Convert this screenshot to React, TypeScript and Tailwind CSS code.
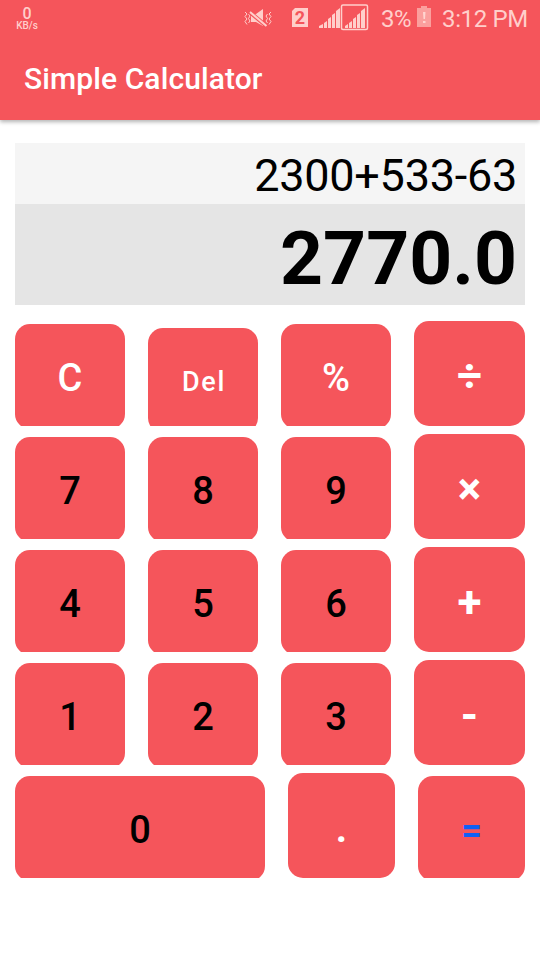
import clsx from 'clsx'

type Key = {
  label: string
  className: string
}

const digit = 'mt-[3px] pt-[3px] text-[38px] font-medium text-black'
const operator = 'pt-1 text-[44px] font-bold text-white'

const rows: Key[][] = [
  [
    { label: 'C', className: 'mt-[3px] pt-[3px] text-[38px] font-medium text-white' },
    { label: 'Del', className: 'mt-[7px] pt-[3px] pl-[2px] text-[27px] font-medium tracking-[1.6px] text-white' },
    { label: '%', className: 'mt-[3px] pt-[3px] text-[38px] font-medium text-white' },
    { label: '÷', className: operator },
  ],
  [
    { label: '7', className: digit },
    { label: '8', className: digit },
    { label: '9', className: digit },
    { label: '×', className: operator },
  ],
  [
    { label: '4', className: digit },
    { label: '5', className: digit },
    { label: '6', className: digit },
    { label: '+', className: operator },
  ],
  [
    { label: '1', className: digit },
    { label: '2', className: digit },
    { label: '3', className: digit },
    { label: '-', className: operator },
  ],
]

const bottomRow: Key[] = [
  { label: '0', className: digit },
  { label: '.', className: 'pt-[7px] text-[39px] font-bold text-white' },
  { label: '=', className: 'mt-[3px] pt-[5px] text-[36px] font-bold text-[#0f60f5]' },
]

export default function App() {
  return (
    <div className="flex h-[960px] w-[540px] flex-col overflow-hidden bg-white font-[Roboto,sans-serif]">
      <header className="h-[120px] shrink-0 bg-[#f5555b] shadow-[0_2px_4px_rgba(0,0,0,0.3)]">
        <StatusBar />
        <h1 className="pt-6 pl-6 text-[30px] leading-[36px] font-medium tracking-[0.1px] text-white">Simple Calculator</h1>
      </header>

      <main className="px-[15px] pt-[23px]">
        <div className="h-[61px] bg-[#f5f5f5] pr-2 text-right text-[45px] leading-[65px] tracking-[-0.25px] text-black">
          2300+533-63
        </div>
        <div className="h-[101px] bg-[#e5e5e5] pr-2 text-right text-[75px] leading-[109px] font-bold text-black">
          2770.0
        </div>

        <div className="mt-4 flex flex-col gap-2">
          {rows.map(row => (
            <div key={row[0].label} className="grid h-[105px] grid-cols-[110px_110px_110px_111px] gap-x-[23px] overflow-hidden">
              {row.map(k => <KeyButton key={k.label} {...k} />)}
            </div>
          ))}
          <div className="grid h-[105px] grid-cols-[250px_107px_107px] gap-x-[23px] overflow-hidden">
            {bottomRow.map(k => <KeyButton key={k.label} {...k} />)}
          </div>
        </div>
      </main>
    </div>
  )
}

function KeyButton({ label, className }: Key) {
  return (
    <button className={clsx('flex h-[105px] items-center justify-center rounded-[15px] bg-[#f5555b] leading-none', className)}>
      {label}
    </button>
  )
}

function StatusBar() {
  return (
    <div className="flex h-[37px] items-start text-[#ffcfcb]">
      <div className="ml-[15px] w-6 pt-[5px] text-center">
        <p className="text-[16px] leading-[17px] font-medium">0</p>
        <p className="text-[10px] leading-[8px] font-medium">KB/s</p>
      </div>

      <svg className="mt-2 ml-[204px] h-5 w-[30px]" viewBox="0 0 30 20" fill="none" stroke="currentColor">
        <path d="M2 4l2 2-2 2.500 2 2.500-2 2.500 2 3M5.500 6l1.500 2-1.500 2.500 1.500 2.500-1.500 2M28 4l-2 2 2 2.500-2 2.500 2 2.500-2 3M24.500 6l-1.500 2 1.500 2.500-1.500 2.500 1.500 2" strokeWidth="1" />
        <path d="M8 6h5l7-5v17l-7-4H8z" fill="currentColor" stroke="none" />
        <path d="M6 3.500l18 15" stroke="#f5555b" strokeWidth="4" />
        <path d="M7 4l16.500 14" strokeWidth="2" />
      </svg>

      <div className="relative mt-2 ml-[19px] h-[19px] w-4">
        <svg className="h-full w-full" viewBox="0 0 16 19" fill="currentColor">
          <path d="M3 0h13v19H0V3z" />
        </svg>
        <span className="absolute inset-0 text-center text-[18px] leading-[20px] font-bold text-[#f5555b]">2</span>
      </div>

      <svg className="mt-[3px] ml-[11px] h-7 w-[52px]" viewBox="0 0 52 28" fill="currentColor">
        <path d="M0 25v-2l4-2v4zM5 20l3-2v7H5zM9 16l3-2v11H9zM13 12l3-2v15h-3zM17 8l4-3v20h-4z" />
        <rect x="22.500" y="2" width="26" height="24.500" rx="1.500" fill="none" stroke="currentColor" strokeWidth="1.500" />
        <path d="M26 25v-2l3-2v4zM30 20l3-2v7h-3zM34 16l3-2v11h-3zM38 12l3-2v15h-3zM42 8l4-3v20h-4z" />
      </svg>

      <span className="mt-[5px] ml-[10px] w-9 text-[24px] leading-[28px] tracking-[-0.4px]">3%</span>
      <svg className="mt-[6px] h-[21px] w-[14px]" viewBox="0 0 14 21">
        <path d="M0 2h4V0h6v2h4v19H0z" fill="#fb9f9d" />
        <path d="M6 6h2.500l-.5 7H6.500zM6 15h2.500v2H6z" fill="#ffd5d0" />
      </svg>
      <span className="mt-[5px] ml-[11px] text-[24px] leading-[28px] tracking-[-0.35px] whitespace-nowrap">3:12 PM</span>
    </div>
  )
}
